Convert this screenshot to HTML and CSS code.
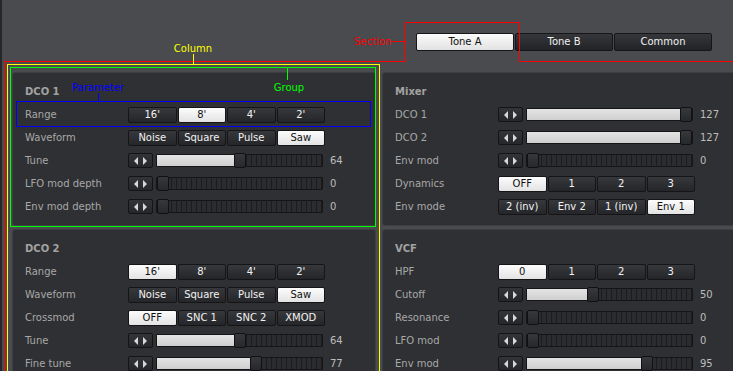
FILE: index.html
```html
<!DOCTYPE html>
<html>
<head>
<meta charset="utf-8">
<link rel="stylesheet" href="styles.css">
</head>
<body>
<div class="app">
  <header class="topbar">
    <nav class="tabs">
      <div class="tab on">Tone A</div>
      <div class="tab">Tone B</div>
      <div class="tab">Common</div>
    </nav>
  </header>
  <main class="columns">
    <div class="col">
      <section class="group">
        <h2>DCO 1</h2>
        <div class="row"><span class="label">Range</span><div class="seg"><div class="btn">16'</div><div class="btn on">8'</div><div class="btn">4'</div><div class="btn">2'</div></div></div>
        <div class="row"><span class="label">Waveform</span><div class="seg"><div class="btn">Noise</div><div class="btn">Square</div><div class="btn">Pulse</div><div class="btn on">Saw</div></div></div>
        <div class="row"><span class="label">Tune</span><div class="slider"><div class="spin"><svg width="14" height="8" viewBox="0 0 14 8"><polygon points="4,0 4,8 0,4"/><polygon points="9,0 9,8 13,4"/></svg></div><div class="track" style="--p:0.504"><div class="fill"></div><div class="handle"></div></div><span class="val">64</span></div></div>
        <div class="row"><span class="label">LFO mod depth</span><div class="slider"><div class="spin"><svg width="14" height="8" viewBox="0 0 14 8"><polygon points="4,0 4,8 0,4"/><polygon points="9,0 9,8 13,4"/></svg></div><div class="track" style="--p:0"><div class="fill"></div><div class="handle"></div></div><span class="val">0</span></div></div>
        <div class="row"><span class="label">Env mod depth</span><div class="slider"><div class="spin"><svg width="14" height="8" viewBox="0 0 14 8"><polygon points="4,0 4,8 0,4"/><polygon points="9,0 9,8 13,4"/></svg></div><div class="track" style="--p:0"><div class="fill"></div><div class="handle"></div></div><span class="val">0</span></div></div>
      </section>
      <section class="group">
        <h2>DCO 2</h2>
        <div class="row"><span class="label">Range</span><div class="seg"><div class="btn on">16'</div><div class="btn">8'</div><div class="btn">4'</div><div class="btn">2'</div></div></div>
        <div class="row"><span class="label">Waveform</span><div class="seg"><div class="btn">Noise</div><div class="btn">Square</div><div class="btn">Pulse</div><div class="btn on">Saw</div></div></div>
        <div class="row"><span class="label">Crossmod</span><div class="seg"><div class="btn on">OFF</div><div class="btn">SNC 1</div><div class="btn">SNC 2</div><div class="btn">XMOD</div></div></div>
        <div class="row"><span class="label">Tune</span><div class="slider"><div class="spin"><svg width="14" height="8" viewBox="0 0 14 8"><polygon points="4,0 4,8 0,4"/><polygon points="9,0 9,8 13,4"/></svg></div><div class="track" style="--p:0.504"><div class="fill"></div><div class="handle"></div></div><span class="val">64</span></div></div>
        <div class="row"><span class="label">Fine tune</span><div class="slider"><div class="spin"><svg width="14" height="8" viewBox="0 0 14 8"><polygon points="4,0 4,8 0,4"/><polygon points="9,0 9,8 13,4"/></svg></div><div class="track" style="--p:0.606"><div class="fill"></div><div class="handle"></div></div><span class="val">77</span></div></div>
      </section>
    </div>
    <div class="col">
      <section class="group">
        <h2>Mixer</h2>
        <div class="row"><span class="label">DCO 1</span><div class="slider"><div class="spin"><svg width="14" height="8" viewBox="0 0 14 8"><polygon points="4,0 4,8 0,4"/><polygon points="9,0 9,8 13,4"/></svg></div><div class="track" style="--p:1"><div class="fill"></div><div class="handle"></div></div><span class="val">127</span></div></div>
        <div class="row"><span class="label">DCO 2</span><div class="slider"><div class="spin"><svg width="14" height="8" viewBox="0 0 14 8"><polygon points="4,0 4,8 0,4"/><polygon points="9,0 9,8 13,4"/></svg></div><div class="track" style="--p:1"><div class="fill"></div><div class="handle"></div></div><span class="val">127</span></div></div>
        <div class="row"><span class="label">Env mod</span><div class="slider"><div class="spin"><svg width="14" height="8" viewBox="0 0 14 8"><polygon points="4,0 4,8 0,4"/><polygon points="9,0 9,8 13,4"/></svg></div><div class="track" style="--p:0"><div class="fill"></div><div class="handle"></div></div><span class="val">0</span></div></div>
        <div class="row"><span class="label">Dynamics</span><div class="seg"><div class="btn on">OFF</div><div class="btn">1</div><div class="btn">2</div><div class="btn">3</div></div></div>
        <div class="row"><span class="label">Env mode</span><div class="seg"><div class="btn">2 (inv)</div><div class="btn">Env 2</div><div class="btn">1 (inv)</div><div class="btn on">Env 1</div></div></div>
      </section>
      <section class="group">
        <h2>VCF</h2>
        <div class="row"><span class="label">HPF</span><div class="seg"><div class="btn on">0</div><div class="btn">1</div><div class="btn">2</div><div class="btn">3</div></div></div>
        <div class="row"><span class="label">Cutoff</span><div class="slider"><div class="spin"><svg width="14" height="8" viewBox="0 0 14 8"><polygon points="4,0 4,8 0,4"/><polygon points="9,0 9,8 13,4"/></svg></div><div class="track" style="--p:0.394"><div class="fill"></div><div class="handle"></div></div><span class="val">50</span></div></div>
        <div class="row"><span class="label">Resonance</span><div class="slider"><div class="spin"><svg width="14" height="8" viewBox="0 0 14 8"><polygon points="4,0 4,8 0,4"/><polygon points="9,0 9,8 13,4"/></svg></div><div class="track" style="--p:0"><div class="fill"></div><div class="handle"></div></div><span class="val">0</span></div></div>
        <div class="row"><span class="label">LFO mod</span><div class="slider"><div class="spin"><svg width="14" height="8" viewBox="0 0 14 8"><polygon points="4,0 4,8 0,4"/><polygon points="9,0 9,8 13,4"/></svg></div><div class="track" style="--p:0"><div class="fill"></div><div class="handle"></div></div><span class="val">0</span></div></div>
        <div class="row"><span class="label">Env mod</span><div class="slider"><div class="spin"><svg width="14" height="8" viewBox="0 0 14 8"><polygon points="4,0 4,8 0,4"/><polygon points="9,0 9,8 13,4"/></svg></div><div class="track" style="--p:0.748"><div class="fill"></div><div class="handle"></div></div><span class="val">95</span></div></div>
      </section>
    </div>
  </main>
  <svg class="annot" width="733" height="371" viewBox="0 0 733 371">
    <polyline class="a-red" points="4.5,371 4.5,61.5 405.5,61.5 405.5,22.5 519.5,22.5 519.5,61.5 733,61.5"/>
    <line class="a-red" x1="391" y1="41.5" x2="405" y2="41.5"/>
    <text class="t-red" x="354" y="45">Section</text>
    <rect class="a-yellow" x="7.5" y="64.5" width="372" height="320"/>
    <line class="a-yellow" x1="193.5" y1="54" x2="193.5" y2="64"/>
    <text class="t-yellow" x="193" y="52" text-anchor="middle">Column</text>
    <rect class="a-green" x="10.5" y="67.5" width="365" height="159"/>
    <line class="a-green" x1="287.5" y1="68" x2="287.5" y2="80"/>
    <text class="t-green" x="289" y="91" text-anchor="middle">Group</text>
    <rect class="a-blue" x="16.5" y="101.5" width="354" height="25"/>
    <line class="a-blue" x1="98.5" y1="93" x2="98.5" y2="101"/>
    <text class="t-blue" x="98" y="91" text-anchor="middle">Parameter</text>
  </svg>
</div>
</body>
</html>
```
FILE: styles.css
```css
html, body {
  margin: 0;
  padding: 0;
  overflow: hidden;
}
body {
  background: #4a4b4f;
  font-family: "DejaVu Sans", "Liberation Sans", sans-serif;
  font-size: 10px;
}
.app {
  position: relative;
  width: 733px;
  height: 371px;
  overflow: hidden;
  background: linear-gradient(90deg, #262729 0 2px, #4a4b4f 2px);
}
.topbar {
  height: 72px;
  box-sizing: border-box;
  padding: 33px 0 0 416px;
}
.tabs {
  display: flex;
  gap: 1px;
}
.tab {
  width: 98px;
  height: 18px;
  box-sizing: border-box;
  border: 1px solid #161618;
  border-radius: 2px;
  background: linear-gradient(#36373a, #222326);
  color: #f0f0f0;
  text-align: center;
  line-height: 16px;
  font-size: 10px;
}
.tab.on {
  background: linear-gradient(#fbfbfb, #e2e2e2);
  color: #111;
}
.columns {
  display: grid;
  grid-template-columns: 364px 364px;
  column-gap: 6px;
  padding-left: 12px;
}
.col {
  display: flex;
  flex-direction: column;
  gap: 3px;
}
.group {
  height: 154px;
  box-sizing: border-box;
  background: #2f3033;
  border: 1px solid #3d3e42;
  border-radius: 3px;
  padding: 13px 12px 7px;
}
.group h2 {
  margin: 0 0 6px;
  height: 11px;
  line-height: 11px;
  font-size: 10px;
  font-weight: bold;
  color: #a2a2a2;
}
.row {
  display: grid;
  grid-template-columns: 103px auto;
  align-items: center;
  height: 23px;
}
.label {
  color: #a8a8a8;
}
.seg {
  display: grid;
  grid-template-columns: repeat(4, 1fr);
  gap: 1px;
  width: 197px;
}
.btn {
  height: 16px;
  box-sizing: border-box;
  border: 1px solid #151517;
  border-radius: 2px;
  background: linear-gradient(#37383b, #252629);
  color: #f2f2f2;
  text-align: center;
  line-height: 14px;
}
.btn.on {
  background: linear-gradient(#fcfcfc, #e3e3e3);
  color: #111;
}
.slider {
  display: flex;
  align-items: center;
}
.spin {
  width: 25px;
  height: 15px;
  box-sizing: border-box;
  border: 1px solid #141416;
  border-radius: 2px;
  background: linear-gradient(#333437, #26272a);
  display: flex;
  align-items: center;
  justify-content: center;
  margin-right: 3px;
}
.spin svg {
  fill: #d8d8d8;
}
.track {
  position: relative;
  width: 167px;
  height: 13px;
  box-sizing: border-box;
  border: 1px solid #151517;
  border-radius: 1px;
  background: repeating-linear-gradient(90deg, #2b2c2f 0 4px, #1b1c1e 4px 5px);
}
.fill {
  position: absolute;
  left: 0;
  top: 0;
  bottom: 0;
  width: calc((100% - 12px) * var(--p) + 2px);
  background: linear-gradient(#e4e4e4, #cfcfcf);
}
.handle {
  position: absolute;
  top: -2px;
  left: calc((100% - 12px) * var(--p));
  width: 12px;
  height: 15px;
  box-sizing: border-box;
  border: 1px solid #111113;
  border-radius: 2px;
  background: linear-gradient(#37383b, #27282b);
}
.val {
  margin-left: 7px;
  color: #bdbdbd;
}
.annot {
  position: absolute;
  left: 0;
  top: 0;
  pointer-events: none;
  font-family: "DejaVu Sans", sans-serif;
  font-size: 10px;
}
.annot polyline, .annot rect, .annot line {
  fill: none;
  stroke-width: 1;
}
.a-red { stroke: #ff0000; }
.a-yellow { stroke: #ffff00; }
.a-green { stroke: #00ff00; }
.a-blue { stroke: #0000ff; }
.t-red { fill: #ff0000; }
.t-yellow { fill: #ffff00; }
.t-green { fill: #00ff00; }
.t-blue { fill: #0000ff; }
```
